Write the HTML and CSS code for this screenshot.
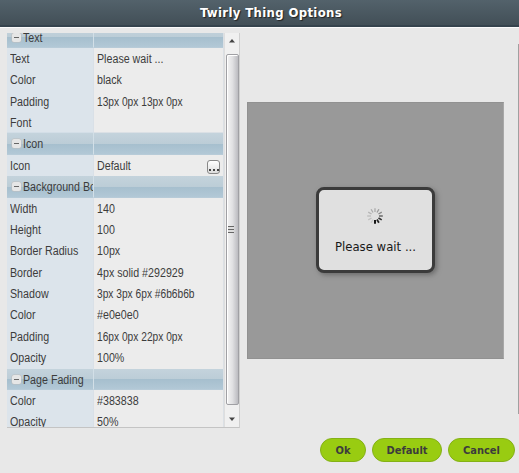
FILE: index.html
```html
<!DOCTYPE html>
<html lang="en">
<head>
<meta charset="utf-8">
<title>Twirly Thing Options</title>
<link rel="stylesheet" href="styles.css">
</head>
<body>
<div class="dialog">
  <header class="title"><span>Twirly Thing Options</span></header>
  <main class="content">
    <section class="panel">
      <div class="grid">
        <div class="row group"><div class="name"><i class="toggle"></i><span>Text</span></div><div class="value"></div></div>
        <div class="row"><div class="name"><span>Text</span></div><div class="value"><span>Please wait ...</span></div></div>
        <div class="row"><div class="name"><span>Color</span></div><div class="value"><span>black</span></div></div>
        <div class="row"><div class="name"><span>Padding</span></div><div class="value tight"><span>13px 0px 13px 0px</span></div></div>
        <div class="row"><div class="name"><span>Font</span></div><div class="value"></div></div>
        <div class="row group"><div class="name"><i class="toggle"></i><span>Icon</span></div><div class="value"></div></div>
        <div class="row"><div class="name"><span>Icon</span></div><div class="value"><span>Default</span><button class="browse"><i></i><i></i><i></i></button></div></div>
        <div class="row group"><div class="name"><i class="toggle"></i><span>Background Box</span></div><div class="value"></div></div>
        <div class="row"><div class="name"><span>Width</span></div><div class="value"><span>140</span></div></div>
        <div class="row"><div class="name"><span>Height</span></div><div class="value"><span>100</span></div></div>
        <div class="row"><div class="name"><span>Border Radius</span></div><div class="value"><span>10px</span></div></div>
        <div class="row"><div class="name"><span>Border</span></div><div class="value"><span>4px solid #292929</span></div></div>
        <div class="row"><div class="name"><span>Shadow</span></div><div class="value tight"><span>3px 3px 6px #6b6b6b</span></div></div>
        <div class="row"><div class="name"><span>Color</span></div><div class="value"><span>#e0e0e0</span></div></div>
        <div class="row"><div class="name"><span>Padding</span></div><div class="value tight"><span>16px 0px 22px 0px</span></div></div>
        <div class="row"><div class="name"><span>Opacity</span></div><div class="value"><span>100%</span></div></div>
        <div class="row group"><div class="name"><i class="toggle"></i><span>Page Fading</span></div><div class="value"></div></div>
        <div class="row"><div class="name"><span>Color</span></div><div class="value"><span>#383838</span></div></div>
        <div class="row"><div class="name"><span>Opacity</span></div><div class="value"><span>50%</span></div></div>
      </div>
      <div class="scrollbar">
        <svg class="arrow" viewBox="0 0 13 21"><path d="M3 9.500 6 6l3 3.500z" fill="#444"/></svg>
        <div class="thumb"><div class="grip"></div></div>
        <svg class="arrow" viewBox="0 0 13 21"><path d="M3 12.500h6l-3 3.500z" fill="#444"/></svg>
      </div>
    </section>
    <section class="preview">
      <div class="wait">
        <svg class="spinner" viewBox="-8 -8 16 16" stroke-width="1.300">
          <path d="M0-4V-7.800" stroke="#aaa"/>
          <path d="M0-4V-7.800" stroke="#999" transform="rotate(30)"/>
          <path d="M0-4V-7.800" stroke="#888" transform="rotate(60)"/>
          <path d="M0-4V-7.800" stroke="#555" transform="rotate(90)"/>
          <path d="M0-4V-7.800" stroke="#333" stroke-width="1.600" transform="rotate(120)"/>
          <path d="M0-4V-7.800" stroke="#222" stroke-width="1.700" transform="rotate(150)"/>
          <path d="M0-4V-7.800" stroke="#000" stroke-width="1.800" transform="rotate(180)"/>
          <path d="M0-4V-7.800" stroke="#c8c8c8" transform="rotate(210)"/>
          <path d="M0-4V-7.800" stroke="#c0c0c0" transform="rotate(240)"/>
          <path d="M0-4V-7.800" stroke="#bbb" transform="rotate(270)"/>
          <path d="M0-4V-7.800" stroke="#b4b4b4" transform="rotate(300)"/>
          <path d="M0-4V-7.800" stroke="#aaa" transform="rotate(330)"/>
        </svg>
        <span>Please wait ...</span>
      </div>
    </section>
    <div class="edge"></div>
  </main>
  <footer class="actions">
    <button class="btn ok">Ok</button>
    <button class="btn default">Default</button>
    <button class="btn cancel">Cancel</button>
  </footer>
</div>
</body>
</html>
```
FILE: styles.css
```css
* { box-sizing: border-box; }
body { margin: 0; background: #e8e8e8; overflow: hidden; }
button { font: inherit; margin: 0; padding: 0; }
.dialog { width: 519px; height: 473px; display: flex; flex-direction: column; background: #e8e8e8; }
.title {
  height: 27px; flex: none; display: flex; justify-content: center; align-items: center;
  padding-left: 23px;
  background: linear-gradient(#53626b, #424f57);
  border-bottom: 2px solid #35434d;
  box-shadow: 0 1px 0 #fafafa;
  font: bold 13px "DejaVu Sans Condensed", "DejaVu Sans", sans-serif; font-stretch: condensed; color: #fff;
  letter-spacing: 0.350px;
  text-shadow: 1px 1px 1px #222;
}
.content { height: 401px; flex: none; display: flex; padding: 6px 0 0 7px; }
.panel {
  width: 233px; height: 395px; flex: none; display: flex; overflow: hidden;
  border-right: 1px solid #cfcfcf; border-bottom: 1px solid #c4c4c4;
  background: #ececec;
}
.grid { width: 217px; flex: none; margin-top: -6.400px; border-right: 1px solid #dbe0e5; }
.row {
  height: 21.390px; display: grid; grid-template-columns: 87px 1fr;
  font: 12px/22px "Liberation Sans", sans-serif; color: #3c3c3c;
}
.row span { display: block; transform: scaleX(0.890); transform-origin: 0 0; }
.row .tight span { transform: scaleX(0.850); }
.name { background: #dce4eb; border-right: 1px solid #d9e0e7; border-bottom: 1px solid #d3dee7; padding-left: 2.500px; overflow: hidden; white-space: nowrap; }
.value { background: #ececec; border-bottom: 1px solid #dbe0e5; padding-left: 3px; display: flex; white-space: nowrap; }
.group .name, .group .value { background: linear-gradient(#c4d3dc 0, #bccdd7 50%, #a6bfce 52%, #b2c8d6 100%); border-bottom-color: #b7cbd8; line-height: 23px; }
.group .name { display: flex; padding-left: 5px; border-right-color: #d2dfe7; }
.toggle {
  width: 9px; height: 9px; margin: 6px 2px 0 0; border-radius: 2px; flex: none;
  background: linear-gradient(#666, #666) center / 5px 1px no-repeat, #e6e6e6;
  box-shadow: 0 0 0 0.500px #bdbdbd;
}
.browse {
  width: 13px; height: 14px; margin: 5px 3px 0 auto; border: 1px solid #888; border-radius: 3px;
  background: linear-gradient(#fff, #ddd); display: flex; justify-content: center; align-items: flex-end; gap: 2px; padding-bottom: 2px;
}
.browse i { width: 2px; height: 2px; background: #444; }
.scrollbar { width: 15px; display: flex; flex-direction: column; padding-left: 1px; border-left: 1px solid #dedede; background: #f0f0f0; }
.arrow { width: 13px; height: 21px; flex: none; display: block; }
.thumb {
  height: 351px; width: 13px; flex: none; border: 1px solid #a0a0a4; border-radius: 2px;
  box-shadow: inset 1px 1px #fff; background: linear-gradient(90deg, #f4f4f4, #e0e0e2 50%, #bbbbc0);
  display: flex; align-items: center; padding-left: 1px;
}
.grip { width: 6px; height: 7px; background: repeating-linear-gradient(#666 0 1px, #ddd 1px 3px); }
.preview {
  width: 257px; height: 257px; flex: none; margin: 68.500px 0 0 7px;
  padding: 84.500px 0 0 68px; background: #999; border: 1px solid #919191; border-right-color: #a8a8a8;
}
.wait {
  width: 119px; height: 86px; border: 3px solid #3b3b3b; border-radius: 8px; background: #e0e0e0;
  box-shadow: 2px 2px 5px #6b6b6b; display: flex; flex-direction: column; align-items: center; padding-top: 18px;
}
.spinner { width: 16px; height: 16px; flex: none; margin-right: 2px; }
.wait span { margin-top: 15px; font: 11.700px/16px "DejaVu Sans", sans-serif; color: #181818; white-space: nowrap; }
.edge { width: 1px; height: 370px; margin: 11px 0 0 auto; background: #a0a0a0; }
.actions { display: flex; justify-content: flex-end; gap: 6px; padding: 10px 4px 0 0; }
.btn {
  height: 24px; border: 1px solid #84b116; border-radius: 12px; background: #9c1;
  font: bold 11px/21px "DejaVu Sans Condensed", "DejaVu Sans", sans-serif; font-stretch: condensed; color: #3c3c3c;
}
.ok { width: 46px; }
.default { width: 70px; }
.cancel { width: 67px; }
```
